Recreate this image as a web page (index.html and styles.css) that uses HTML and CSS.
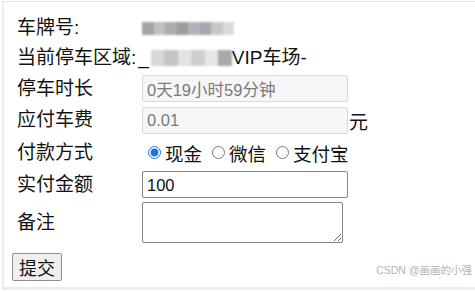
FILE: index.html
```html
<!DOCTYPE html>
<html>
<head>
<meta charset="utf-8">
<link rel="stylesheet" href="styles.css">
</head>
<body>
<div class="frame">
  <div class="row r1">
    <div class="label">车牌号:</div>
    <div class="value"><span class="blur plate"><i></i><i></i><i></i><i></i><i></i><i></i><i></i><i></i></span></div>
  </div>
  <div class="row r2">
    <div class="label wide">当前停车区域: <span class="under">_</span><span class="blur area"><i></i><i></i><i></i><i></i><i></i><i></i></span>VIP车场-</div>
  </div>
  <div class="row r3">
    <div class="label">停车时长</div>
    <div class="value"><input class="field" disabled value="0天19小时59分钟"></div>
  </div>
  <div class="row r4">
    <div class="label">应付车费</div>
    <div class="value"><input class="field" disabled value="0.01"><span class="unit">元</span></div>
  </div>
  <div class="row r5">
    <div class="label">付款方式</div>
    <div class="value radios">
      <label><input type="radio" name="p" checked>现金</label>
      <label><input type="radio" name="p">微信</label>
      <label><input type="radio" name="p">支付宝</label>
    </div>
  </div>
  <div class="row r6">
    <div class="label">实付金额</div>
    <div class="value"><input class="field live" value="100"></div>
  </div>
  <div class="row r7">
    <div class="label">备注</div>
    <div class="value"><textarea class="note"></textarea></div>
  </div>
  <div class="row r8">
    <button class="submit">提交</button>
  </div>
  <div class="mark">CSDN @画画的小强</div>
</div>
</body>
</html>
```
FILE: styles.css
```css
html, body {
  margin: 0;
  padding: 0;
  background: #ffffff;
}
body {
  font-family: "Liberation Sans", "Noto Sans CJK SC", sans-serif;
  color: #111;
}
.frame {
  position: relative;
  margin: 1px 0 0 2px;
  height: 289px;
  box-sizing: border-box;
  border-top: 1px solid #e4e4e4;
  border-left: 2px solid #ececec;
  border-bottom: 3px solid #ececec;
  padding: 11px 0 0 8px;
}
.row {
  display: flex;
  align-items: center;
}
.r1, .r2 { height: 30px; }
.r3 { height: 31px; }
.r4 { height: 32px; }
.r5 { height: 33px; }
.r6 { height: 31px; }
.r7 { height: 45px; }
.r8 { height: 36px; padding-top: 8px; box-sizing: border-box; }
.label {
  width: 130px;
  box-sizing: border-box;
  padding-left: 5px;
  font-size: 19px;
  line-height: 24px;
  flex: none;
  white-space: nowrap;
}
.label.wide { width: auto; display: flex; align-items: center; }
.value {
  display: flex;
  align-items: center;
}
.blur {
  display: inline-flex;
  filter: blur(1.2px);
}
.blur i {
  display: block;
  width: 11.5px;
  height: 13px;
}
.plate i:nth-child(1) { background: #a3a3a3; }
.plate i:nth-child(2) { background: #c2bfbf; }
.plate i:nth-child(3) { background: #adadb0; }
.plate i:nth-child(4) { background: #9c9c9c; }
.plate i:nth-child(5) { background: #b3b3c0; }
.plate i:nth-child(6) { background: #a8a8a8; }
.plate i:nth-child(7) { background: #c8c8c6; }
.plate i:nth-child(8) { background: #dadada; }
.under { margin-left: 2px; margin-right: 2px; }
.area i { height: 16px; width: 13.5px; }
.area i:nth-child(1) { background: #d8d8d8; }
.area i:nth-child(2) { background: #c4c4c4; }
.area i:nth-child(3) { background: #e0e4e6; }
.area i:nth-child(4) { background: #cfcfcf; }
.area i:nth-child(5) { background: #e6e6e6; }
.area i:nth-child(6) { background: #a9a9a9; }
.field {
  width: 206px;
  height: 27px;
  box-sizing: border-box;
  margin: 0;
  padding: 1px 4px 0;
  font-family: "Liberation Sans", "Noto Sans CJK SC", sans-serif;
  font-size: 16.5px;
  border: 1px solid #d9d9d9;
  border-radius: 2px;
  background: #f6f6f6;
  color: #7a7a7a;
}
.field.live {
  background: #fff;
  border-color: #858585;
  color: #111;
}
.unit {
  font-size: 19px;
  margin-left: 1px;
}
.radios label {
  display: flex;
  align-items: center;
  font-size: 18.5px;
  margin-right: 4px;
}
.radios input {
  width: 13px;
  height: 13px;
  margin: 0 4px 0 6px;
  accent-color: #1a73e8;
}
.note {
  width: 201px;
  height: 41px;
  box-sizing: border-box;
  margin: 0;
  border: 1px solid #858585;
  border-radius: 2px;
  resize: both;
}
.submit {
  width: 50px;
  height: 28px;
  padding: 0;
  font-family: "Liberation Sans", "Noto Sans CJK SC", sans-serif;
  font-size: 18px;
  color: #111;
  background: #efefef;
  border: 1px solid #8f8f8f;
  border-radius: 2px;
}
.mark {
  position: absolute;
  right: 3px;
  bottom: 10px;
  font-size: 10.5px;
  color: #b3b3b3;
}
```
